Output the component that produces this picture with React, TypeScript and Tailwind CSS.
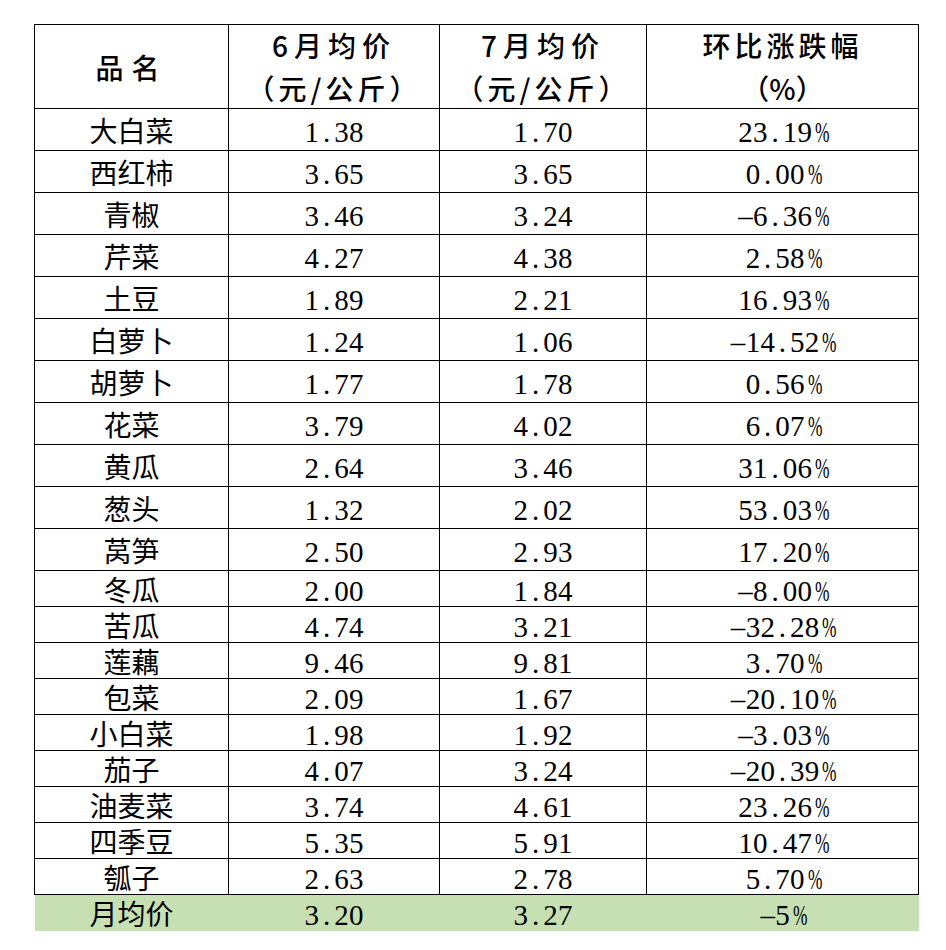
const rows: [string, string, string, string][] = [
  ['大白菜', '1.38', '1.70', '23.19%'],
  ['西红柿', '3.65', '3.65', '0.00%'],
  ['青椒', '3.46', '3.24', '-6.36%'],
  ['芹菜', '4.27', '4.38', '2.58%'],
  ['土豆', '1.89', '2.21', '16.93%'],
  ['白萝卜', '1.24', '1.06', '-14.52%'],
  ['胡萝卜', '1.77', '1.78', '0.56%'],
  ['花菜', '3.79', '4.02', '6.07%'],
  ['黄瓜', '2.64', '3.46', '31.06%'],
  ['葱头', '1.32', '2.02', '53.03%'],
  ['莴笋', '2.50', '2.93', '17.20%'],
  ['冬瓜', '2.00', '1.84', '-8.00%'],
  ['苦瓜', '4.74', '3.21', '-32.28%'],
  ['莲藕', '9.46', '9.81', '3.70%'],
  ['包菜', '2.09', '1.67', '-20.10%'],
  ['小白菜', '1.98', '1.92', '-3.03%'],
  ['茄子', '4.07', '3.24', '-20.39%'],
  ['油麦菜', '3.74', '4.61', '23.26%'],
  ['四季豆', '5.35', '5.91', '10.47%'],
  ['瓠子', '2.63', '2.78', '5.70%'],
];

const cjk = "font-['Noto_Sans_CJK_SC',sans-serif] text-[28px]";
const cell = 'border border-black text-center p-0 leading-none';

// SimSun-style half-width digits: every glyph sits in its own fixed cell
function Num({ value }: { value: string }) {
  return (
    <span className="inline-block pt-[5px] font-['Liberation_Serif',serif] text-[29px] leading-none whitespace-nowrap">
      {value.split('').map((ch, i) => (
        <span
          key={i}
          className={
            ch === '%'
              ? 'inline-block w-[14.8px] scale-x-60 text-center'
              : 'inline-block w-[14.8px] text-center'
          }
        >
          {ch === '-' ? '–' : ch}
        </span>
      ))}
    </span>
  );
}

export default function App() {
  return (
    <div className="min-h-[950px] w-[946px] bg-white pl-[34px] pt-[24px] text-black">
      <table className="w-[884px] table-fixed border-collapse">
        <colgroup>
          <col className="w-[194px]" />
          <col className="w-[211px]" />
          <col className="w-[207px]" />
          <col className="w-[272px]" />
        </colgroup>
        <thead>
          <tr className="h-[84px]">
            <th className={`${cell} ${cjk} font-medium tracking-[8px]`}>品名</th>
            <th className={`${cell} ${cjk} font-medium`}>
              <div className="tracking-[6px]">6月均价</div>
              <div className="mt-[15px] tracking-[4px]">（元/公斤）</div>
            </th>
            <th className={`${cell} ${cjk} font-medium`}>
              <div className="tracking-[6px]">7月均价</div>
              <div className="mt-[15px] tracking-[4px]">（元/公斤）</div>
            </th>
            <th className={`${cell} ${cjk} font-medium`}>
              <div className="tracking-[4px]">环比涨跌幅</div>
              <div className="mt-[15px]">（%）</div>
            </th>
          </tr>
        </thead>
        <tbody>
          {rows.map(([name, jun, jul, pct], i) => (
            <tr key={name} className={i < 11 ? 'h-[42px]' : 'h-[36px]'}>
              <td className={`${cell} ${cjk}`}>{name}</td>
              <td className={cell}>
                <Num value={jun} />
              </td>
              <td className={cell}>
                <Num value={jul} />
              </td>
              <td className={cell}>
                <Num value={pct} />
              </td>
            </tr>
          ))}
          <tr className="h-[36px] bg-[#c6e0b4]">
            <td className={`border-t border-black p-0 text-center leading-none ${cjk}`}>月均价</td>
            <td className="border-t border-black p-0 text-center leading-none">
              <Num value="3.20" />
            </td>
            <td className="border-t border-black p-0 text-center leading-none">
              <Num value="3.27" />
            </td>
            <td className="border-t border-black p-0 text-center leading-none">
              <Num value="-5%" />
            </td>
          </tr>
        </tbody>
      </table>
    </div>
  );
}
